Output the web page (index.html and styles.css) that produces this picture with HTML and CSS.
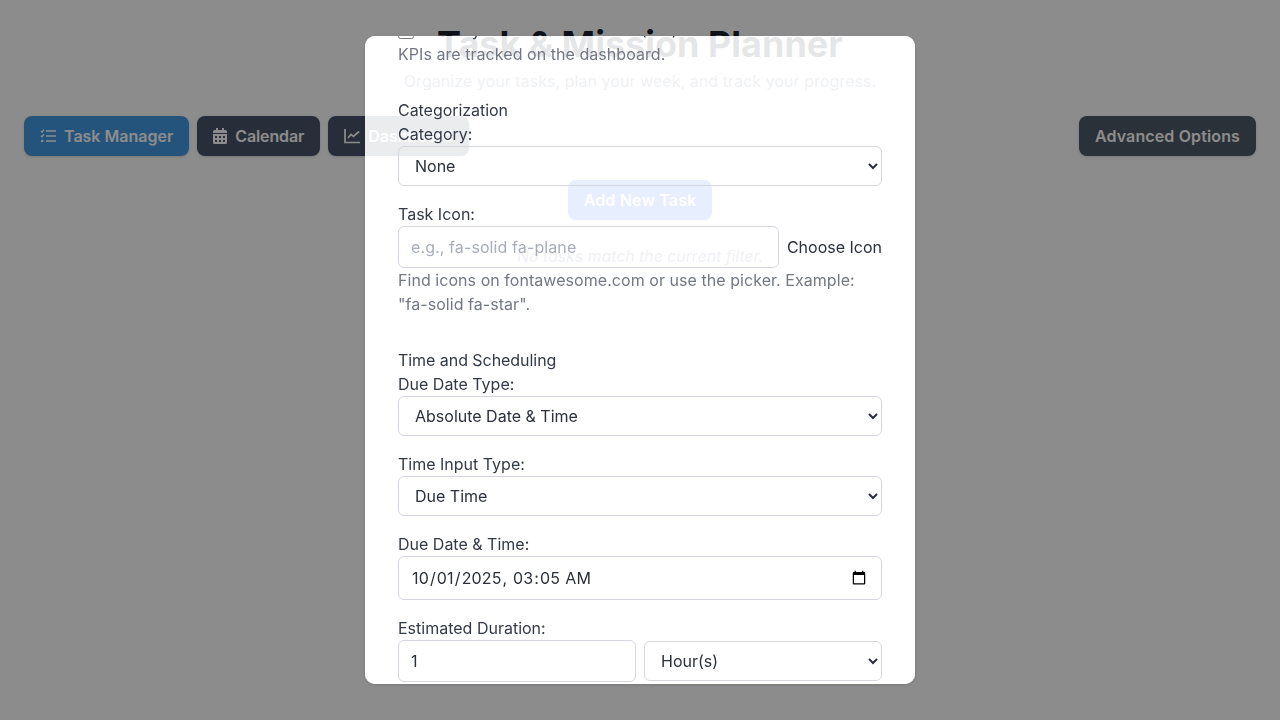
FILE: index.html
```html
<!DOCTYPE html>
<html lang="en">
  <head>
    <meta charset="utf-8" />
    <title>Task &amp; Mission Planner</title>
    <link rel="stylesheet" href="styles.css">
  </head>
  <body>
    <header class="page-header">
      <h1>Task &amp; Mission Planner</h1>
      <p>Organize your tasks, plan your week, and track your progress.</p>
    </header>
    <nav class="tabs">
      <div class="tab-group">
        <button class="btn btn-active">
          <svg class="icon" viewBox="0 0 16 16"><path d="M1 3l1 1 2-2.400M1 7.800l1 1 2-2.400" fill="none" stroke="currentColor" stroke-width="1.400"/><circle cx="2.200" cy="13" r="1.300" fill="currentColor"/><path d="M6 3h10M6 8h10M6 13h10" stroke="currentColor" stroke-width="1.500"/></svg>
          Task Manager
        </button>
        <button class="btn btn-calendar">
          <svg class="icon icon-narrow" viewBox="0 0 14 16"><path fill="currentColor" fill-rule="evenodd" d="M3 0h2v2h4V0h2v2h1.500A1.500 1.500 0 0 1 14 3.500V5H0V3.500A1.500 1.500 0 0 1 1.500 2H3zM0 6h14v8.500a1.500 1.500 0 0 1-1.500 1.500h-11A1.500 1.500 0 0 1 0 14.500zM2 8v2h2V8zm4 0v2h2V8zm4 0v2h2V8zM2 12v2h2v-2zm4 0v2h2v-2zm4 0v2h2v-2z"/></svg>
          Calendar
        </button>
        <button class="btn">
          <svg class="icon" viewBox="0 0 16 16"><path d="M1 1v13.500h15" fill="none" stroke="currentColor" stroke-width="1.700"/><path d="M4 10l3-3.500 2.500 2L15 3.500" fill="none" stroke="currentColor" stroke-width="1.700"/></svg>
          Dashboard
        </button>
      </div>
      <button class="btn btn-options">Advanced Options</button>
    </nav>
    <div class="center-action">
      <button class="btn btn-add">Add New Task</button>
    </div>
    <p class="empty-note">No tasks match the current filter.</p>

    <div class="overlay"></div>
    <div class="modal">
      <form class="modal-body">
        <div class="check-row">
          <input type="checkbox" />
          <label>Is a Key Performance Metric (KPI)</label>
        </div>
        <p class="hint">KPIs are tracked on the dashboard.</p>

        <fieldset class="section">
          <div class="legend">Categorization</div>
          <div class="field">
            <label>Category:</label>
            <select><option>None</option></select>
          </div>
          <div class="field">
            <label>Task Icon:</label>
            <div class="icon-row">
              <input class="text-input" type="text" placeholder="e.g., fa-solid fa-plane" />
              <button type="button" class="link-btn">Choose Icon</button>
            </div>
            <p class="hint">Find icons on fontawesome.com or use the picker. Example: "fa-solid fa-star".</p>
          </div>
        </fieldset>

        <fieldset class="section">
          <div class="legend">Time and Scheduling</div>
          <div class="field">
            <label>Due Date Type:</label>
            <select><option>Absolute Date &amp; Time</option></select>
          </div>
          <div class="field">
            <label>Time Input Type:</label>
            <select><option>Due Time</option></select>
          </div>
          <div class="field">
            <label>Due Date &amp; Time:</label>
            <input class="text-input date-input" type="datetime-local" value="2025-10-01T03:05" />
          </div>
          <div class="field">
            <label>Estimated Duration:</label>
            <div class="duration-row">
              <input class="text-input" type="number" value="1" />
              <select><option>Hour(s)</option></select>
            </div>
          </div>
        </fieldset>
      </form>
    </div>
  </body>
</html>
```

FILE: styles.css
```css
* {
  box-sizing: border-box;
}

body {
  margin: 0;
  padding: 24px;
  background-color: #fff;
  font-family: Inter, "Noto Sans", sans-serif;
  font-size: 16px;
  line-height: 24px;
  color: #333a47;
  overflow: hidden;
}

.page-header {
  text-align: center;
  height: 68px;
}

.page-header h1 {
  margin: 0;
  font-size: 36px;
  line-height: 40px;
  font-weight: 700;
  color: #1a202c;
}

.page-header p {
  margin: 5px 0 0;
  color: #718096;
  letter-spacing: 0.05px;
}

.tabs {
  display: flex;
  justify-content: space-between;
  align-items: center;
  margin-top: 24px;
}

.tab-group {
  display: flex;
  gap: 8px;
}

.btn {
  display: flex;
  align-items: center;
  gap: 8px;
  height: 40px;
  padding: 0 16px;
  border: 0;
  border-radius: 8px;
  background-color: #4a5568;
  color: #fff;
  font-family: inherit;
  font-size: 16px;
  font-weight: 600;
  box-shadow: 0 1px 3px rgba(0, 0, 0, 0.15);
}

.btn-active {
  background-color: #4299e1;
}

.btn-calendar {
  letter-spacing: -0.12px;
}

.btn-options {
  background-color: #4f5a66;
  letter-spacing: 0.13px;
}

.btn-add {
  background-color: #2563eb;
  letter-spacing: 0.17px;
}

.icon {
  width: 16px;
  height: 16px;
}

.icon-narrow {
  width: 14px;
}

.center-action {
  display: flex;
  justify-content: center;
  margin-top: 24px;
}

.empty-note {
  margin: 24px 0 0;
  text-align: center;
  font-style: italic;
  color: #718096;
  letter-spacing: -0.08px;
}

.overlay {
  position: fixed;
  inset: 0;
  background-color: rgba(0, 0, 0, 0.45);
}

.modal {
  position: fixed;
  left: 365px;
  top: 36px;
  width: 550px;
  height: 648px;
  border-radius: 10px;
  background-color: rgba(255, 255, 255, 0.89);
  backdrop-filter: brightness(1.82);
  box-shadow: 0 1px 3px rgba(0, 0, 0, 0.15);
  overflow: hidden;
}

/* scrolled part way down the form */
.modal-body {
  margin-top: -18px;
  padding: 0 33px;
}

.check-row {
  display: flex;
  align-items: center;
  gap: 8px;
  height: 24px;
}

.check-row input {
  width: 16px;
  height: 16px;
  margin: 2px 0 0;
}

.hint {
  margin: 0;
  color: #737884;
  letter-spacing: 0.05px;
}

.legend {
  letter-spacing: -0.05px;
}

.section {
  margin: 32px 0 0;
  padding: 0;
  border: 0;
}

.field {
  display: flex;
  flex-direction: column;
  margin-bottom: 16px;
}

.field:last-child {
  margin-bottom: 0;
}

select,
.text-input {
  font-family: inherit;
  font-size: 16px;
  color: #2b303c;
  background-color: transparent;
  border: 1px solid #d5d6e0;
  border-radius: 6px;
}

select {
  height: 40px;
  padding: 0 12px;
  width: 100%;
}

.text-input {
  height: 42px;
  padding: 0 12px;
  width: 100%;
}

.text-input::placeholder {
  color: #a8aeb9;
  letter-spacing: 0.1px;
}

.date-input {
  height: 44px;
  letter-spacing: 0.15px;
}

.icon-row {
  display: flex;
  align-items: center;
  gap: 8px;
}

.icon-row .text-input {
  flex: 1;
  min-width: 0;
}

.link-btn {
  padding: 0;
  border: 0;
  background: none;
  font-family: inherit;
  font-size: 16px;
  color: #2b303c;
  white-space: nowrap;
}

.duration-row {
  display: flex;
  align-items: center;
  gap: 8px;
}

.duration-row > * {
  flex: 1;
  min-width: 0;
}
```
